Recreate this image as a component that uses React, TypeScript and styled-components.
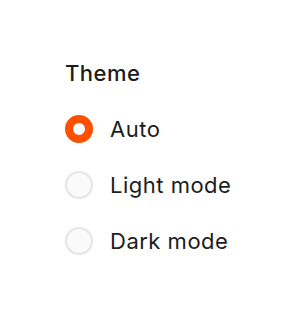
import React, { useState } from 'react';
import styled, { createGlobalStyle } from 'styled-components';

const GlobalStyle = createGlobalStyle`
  html, body {
    margin: 0;
    padding: 0;
    background: #ffffff;
  }
  body {
    font-family: Inter, "Noto Sans", sans-serif;
    color: #1c1c1c;
  }
`;

const Panel = styled.fieldset`
  border: 0;
  margin: 0;
  padding: 59px 0 0 65px;
  display: flex;
  flex-direction: column;
`;

const Legend = styled.div`
  font-size: 22px;
  font-weight: 500;
  line-height: 28px;
  letter-spacing: 0.5px;
  margin-bottom: 28px;
`;

const Options = styled.div`
  display: flex;
  flex-direction: column;
  gap: 28px;
`;

const Option = styled.label`
  display: flex;
  align-items: center;
  gap: 17px;
  cursor: pointer;
  font-size: 22px;
  line-height: 28px;
  letter-spacing: 0.5px;
`;

const Radio = styled.span<{ checked: boolean }>`
  box-sizing: border-box;
  width: 28px;
  height: 28px;
  border-radius: 50%;
  background: ${({ checked }) => (checked ? '#ffffff' : '#fafafa')};
  border: ${({ checked }) => (checked ? '8.5px solid #ff4f00' : '2px solid #e4e4e4')};
  flex-shrink: 0;
`;

const options = ['Auto', 'Light mode', 'Dark mode'];

const App: React.FC = () => {
  const [selected, setSelected] = useState<string>('Auto');

  return (
    <>
      <GlobalStyle />
      <Panel>
        <Legend>Theme</Legend>
        <Options>
          {options.map((name) => (
            <Option key={name} onClick={() => setSelected(name)}>
              <Radio checked={selected === name} />
              {name}
            </Option>
          ))}
        </Options>
      </Panel>
    </>
  );
};

export default App;
